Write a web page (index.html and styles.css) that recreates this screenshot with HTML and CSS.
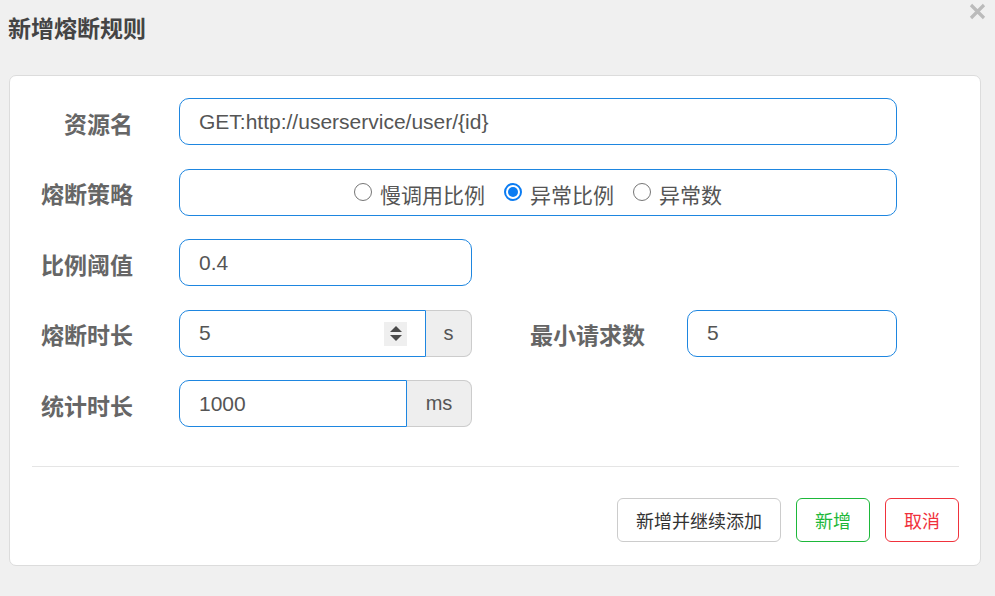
FILE: index.html
```html
<!DOCTYPE html>
<html lang="zh-CN">
<head>
<meta charset="utf-8">
<title>新增熔断规则</title>
<link rel="stylesheet" href="styles.css">
</head>
<body>
<div class="modal-head">
  <h2 class="title">新增熔断规则</h2>
  <button class="close" aria-label="关闭">
    <svg width="17" height="17" viewBox="0 0 17 17"><path d="M2 2 L15 15 M15 2 L2 15" stroke="#bbbbbb" stroke-width="3.2" stroke-linecap="butt"/></svg>
  </button>
</div>
<div class="card">
  <div class="form">
    <div class="row">
      <label class="lbl">资源名</label>
      <input class="field wide" type="text" value="GET:http://userservice/user/{id}">
    </div>
    <div class="row">
      <label class="lbl">熔断策略</label>
      <div class="field wide radios">
        <span class="opt"><span class="radio"></span><span class="opt-text">慢调用比例</span></span>
        <span class="opt"><span class="radio checked"></span><span class="opt-text">异常比例</span></span>
        <span class="opt"><span class="radio"></span><span class="opt-text">异常数</span></span>
      </div>
    </div>
    <div class="row">
      <label class="lbl">比例阈值</label>
      <input class="field half" type="text" value="0.4">
    </div>
    <div class="row">
      <label class="lbl">熔断时长</label>
      <div class="group half">
        <div class="num-wrap">
          <input class="field grouped" type="text" value="5">
          <span class="spin"><span class="up"></span><span class="down"></span></span>
        </div>
        <span class="addon addon-s">s</span>
      </div>
      <label class="lbl lbl2">最小请求数</label>
      <input class="field small" type="text" value="5">
    </div>
    <div class="row">
      <label class="lbl">统计时长</label>
      <div class="group half">
        <input class="field grouped" type="text" value="1000">
        <span class="addon addon-ms">ms</span>
      </div>
    </div>
  </div>
  <div class="divider"></div>
  <div class="actions">
    <button class="btn btn-default">新增并继续添加</button>
    <button class="btn btn-green">新增</button>
    <button class="btn btn-red">取消</button>
  </div>
</div>
</body>
</html>
```

FILE: styles.css
```css
* { box-sizing: border-box; }
html, body {
  margin: 0;
  padding: 0;
  background: #f0f0f0;
  font-family: "Liberation Sans", "Noto Sans CJK SC", sans-serif;
  width: 995px;
  height: 596px;
  overflow: hidden;
}
.modal-head {
  height: 75px;
  display: flex;
  justify-content: space-between;
  align-items: flex-start;
}
.title {
  margin: 0;
  padding: 12px 0 0 8px;
  font-family: "Noto Sans CJK SC", sans-serif;
  font-size: 23px;
  line-height: 30px;
  font-weight: 700;
  color: #444;
}
.close {
  margin: 3px 9px 0 0;
  padding: 0;
  border: 0;
  background: transparent;
  width: 17px;
  height: 17px;
  display: block;
}
.close svg { display: block; }
.card {
  margin: 0 14px 0 9px;
  background: #fff;
  border: 1px solid #dcdcdc;
  border-radius: 7px;
  padding-bottom: 23px;
}
.form {
  padding-top: 22px;
  display: flex;
  flex-direction: column;
  row-gap: 23.5px;
}
.row {
  display: flex;
  align-items: center;
  height: 47px;
}
.lbl {
  width: 123px;
  margin-right: 46px;
  text-align: right;
  font-family: "Noto Sans CJK SC", sans-serif;
  font-weight: 700;
  font-size: 23px;
  line-height: 30px;
  padding-top: 2px;
  color: #666;
  flex: none;
}
.lbl2 {
  width: 173px;
  margin-right: 42px;
}
.field {
  height: 47px;
  border: 1px solid #1e86e0;
  border-radius: 10px;
  padding: 0 0 0 19px;
  font-family: "Liberation Sans", "Noto Sans CJK SC", sans-serif;
  font-size: 21px;
  color: #555;
  background: #fff;
  outline: none;
  margin: 0;
  flex: none;
}
.wide { width: 718px; }
.half { width: 293px; }
.small { width: 210px; }
.radios {
  display: flex;
  align-items: center;
  justify-content: center;
  padding: 3px 0 0 0;
  column-gap: 19px;
}
.opt {
  display: flex;
  align-items: center;
}
.radio {
  width: 18px;
  height: 18px;
  border: 1.5px solid #767676;
  border-radius: 50%;
  margin-right: 8px;
  margin-top: -3px;
  background: #fff;
  display: block;
  position: relative;
}
.radio.checked {
  border: 2px solid #0b7cf2;
}
.radio.checked::after {
  content: "";
  position: absolute;
  left: 2px;
  top: 2px;
  width: 10px;
  height: 10px;
  border-radius: 50%;
  background: #0b7cf2;
}
.opt-text {
  font-family: "Noto Sans CJK SC", sans-serif;
  font-size: 21px;
  color: #555;
  line-height: 28px;
}
.group {
  display: flex;
  height: 47px;
  flex: none;
}
.num-wrap {
  position: relative;
  width: 247px;
  flex: none;
  display: flex;
}
.grouped {
  width: 247px;
  border-radius: 10px 0 0 10px;
}
.group > .grouped { width: 228px; }
.spin {
  position: absolute;
  right: 19px;
  top: 12px;
  width: 23px;
  height: 24px;
  background: #efefef;
  display: flex;
  flex-direction: column;
  align-items: center;
  justify-content: center;
  gap: 3px;
}
.spin .up {
  width: 0; height: 0;
  border-left: 6px solid transparent;
  border-right: 6px solid transparent;
  border-bottom: 6px solid #4a4a4a;
}
.spin .down {
  width: 0; height: 0;
  border-left: 6px solid transparent;
  border-right: 6px solid transparent;
  border-top: 6px solid #4a4a4a;
}
.addon {
  flex: none;
  display: flex;
  align-items: center;
  justify-content: center;
  background: #eeeeee;
  border: 1px solid #cccccc;
  border-left: 0;
  border-radius: 0 8px 8px 0;
  font-size: 20px;
  color: #555;
}
.addon-s { width: 46px; }
.addon-ms { width: 65px; }
.divider {
  height: 1px;
  background: #e5e5e5;
  margin: 39px 21px 0 22px;
}
.actions {
  display: flex;
  justify-content: flex-end;
  column-gap: 15px;
  margin-top: 31px;
  padding-right: 21px;
}
.btn {
  height: 44px;
  border-radius: 6px;
  background: #fff;
  font-family: "Noto Sans CJK SC", sans-serif;
  font-size: 18px;
  padding: 0;
  margin: 0;
  cursor: pointer;
}
.btn-default {
  width: 164px;
  border: 1px solid #cccccc;
  color: #333;
}
.btn-green {
  width: 74px;
  border: 1px solid #1db83a;
  color: #1db83a;
}
.btn-red {
  width: 74px;
  border: 1px solid #f0323c;
  color: #f0323c;
}
```
